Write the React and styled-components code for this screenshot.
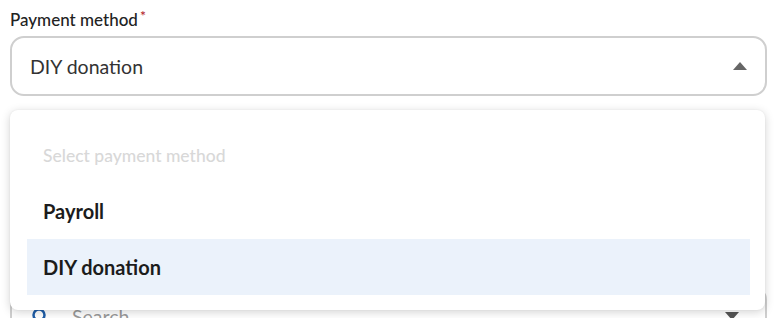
import React from "react";
import styled, { createGlobalStyle } from "styled-components";

const Global = createGlobalStyle`
  html, body { margin: 0; padding: 0; background: #fff; }
  body { font-family: Lato, "Noto Sans", sans-serif; color: #222; overflow: hidden; }
`;

const Page = styled.div`
  position: relative;
  height: 318px;
  overflow: hidden;
  padding: 10px 10px 0 10px;
  display: flex;
  flex-direction: column;
`;

const Label = styled.label`
  font-size: 17px;
  font-weight: 500;
  color: #222;
  line-height: 20px;
  height: 22px;
  display: flex;
  align-items: flex-start;
`;

const Asterisk = styled.span`
  color: #b0141c;
  font-size: 14px;
  line-height: 12px;
  margin-left: 2px;
`;

const SelectBox = styled.div`
  flex-shrink: 0;
  margin-top: 6px;
  height: 56px;
  border: 2px solid #cfcfcf;
  border-radius: 14px;
  display: flex;
  align-items: center;
  justify-content: space-between;
  padding: 0 18px 0 18px;
  font-size: 19.5px;
  color: #333;
`;

const Caret = styled.svg`
  width: 14px;
  height: 8px;
  fill: ${(p) => p.$color || "#666"};
`;

const SearchField = styled.div`
  flex-shrink: 0;
  height: 56px;
  border: 2px solid #cfcfcf;
  border-radius: 14px;
  display: flex;
  align-items: center;
  padding: 0 26px 0 20px;
  gap: 24px;
  font-size: 19.5px;
  color: #999;
  margin-top: 190px;
`;

const SearchIcon = styled.svg`
  width: 16px;
  height: 16px;
`;

const Grow = styled.span`
  flex: 1;
`;

const Menu = styled.div`
  position: absolute;
  left: 10px;
  right: 12px;
  top: 110px;
  background: #fff;
  border-radius: 8px;
  box-shadow: 0 2px 10px rgba(0, 0, 0, 0.18), 0 0 2px rgba(0, 0, 0, 0.06);
  padding: 17px 15px 15px 17px;
  display: flex;
  flex-direction: column;
`;

const Option = styled.div`
  height: 56px;
  display: flex;
  align-items: center;
  padding-left: 16px;
  font-size: ${(p) => (p.$placeholder ? "17.5px" : "20px")};
  font-weight: ${(p) => (p.$placeholder ? 500 : 700)};
  color: ${(p) => (p.$placeholder ? "#d8d8d8" : "#1c1c1c")};
  background: ${(p) => (p.$active ? "#ebf2fb" : "transparent")};
`;

export default function App() {
  return (
    <>
      <Global />
      <Page>
        <Label>
          Payment method<Asterisk>*</Asterisk>
        </Label>
        <SelectBox>
          <span>DIY donation</span>
          <Caret viewBox="0 0 14 8">
            <polygon points="0,8 7,0 14,8" />
          </Caret>
        </SelectBox>
        <SearchField>
          <SearchIcon viewBox="0 0 16 16">
            <circle cx="7" cy="7" r="5.5" fill="none" stroke="#1f5ea8" strokeWidth="2.5" />
            <line x1="11" y1="11" x2="15" y2="15" stroke="#1f5ea8" strokeWidth="2.5" />
          </SearchIcon>
          <Grow>Search</Grow>
          <Caret viewBox="0 0 14 8" $color="#555">
            <polygon points="0,0 14,0 7,8" />
          </Caret>
        </SearchField>
        <Menu>
          <Option $placeholder>Select payment method</Option>
          <Option>Payroll</Option>
          <Option $active>DIY donation</Option>
        </Menu>
      </Page>
    </>
  );
}
